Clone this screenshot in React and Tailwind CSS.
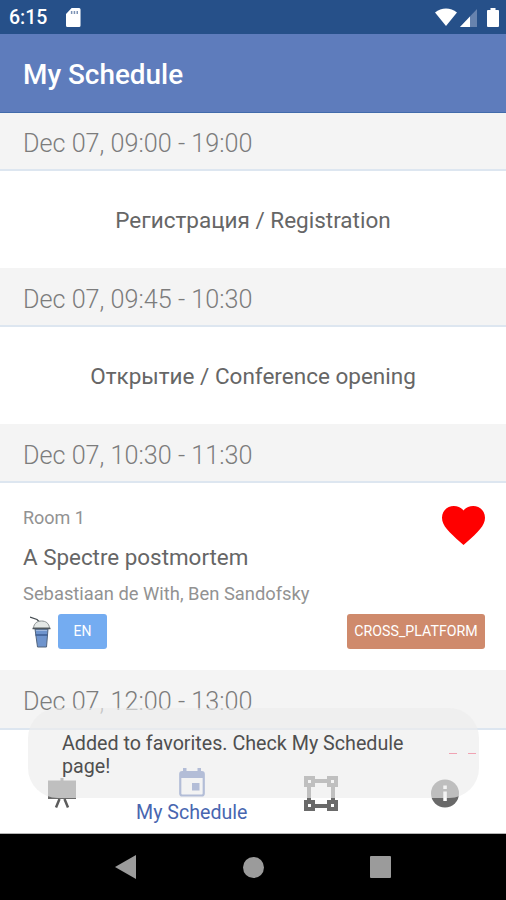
import clsx from 'clsx'

const sessions = [
  { time: 'Dec 07, 09:00 - 19:00', title: 'Регистрация / Registration' },
  { time: 'Dec 07, 09:45 - 10:30', title: 'Открытие / Conference opening' },
]

const StatusBar = () => (
  <div className="h-[34px] shrink-0 bg-[#265089] flex items-center text-white pl-[9px] pr-[7px]">
    <span className="w-[39px] pt-[2px] text-[19.5px] font-medium leading-none">6:15</span>
    <svg width="15" height="19" viewBox="0 0 16 19" preserveAspectRatio="none" className="ml-[18px]">
      <path d="M6 0h8a1.5 1.5 0 0 1 1.500 1.500v16a1.500 1.500 0 0 1-1.500 1.500H1.500A1.500 1.500 0 0 1 0 17.500V6z" fill="#fff" />
      <path d="M6 3v3M9 3v3M12 3v3" stroke="#7c92b4" strokeWidth="1.600" />
    </svg>
    <div className="flex items-center ml-auto">
      <svg width="22" height="18" viewBox="0 0 22 18">
        <path d="M0 4.500C6.500-1 15.500-1 22 4.500L11 18z" fill="#fff" />
      </svg>
      <svg width="17" height="18" viewBox="0 0 17 18" className="ml-[3px] mt-[1px]">
        <path d="M17 0v18H0z" fill="#6783ae" />
        <path d="M10 7.400V18H0z" fill="#fff" />
      </svg>
      <svg width="12" height="19" viewBox="0 0 12 20" preserveAspectRatio="none" className="ml-[10px]">
        <path d="M3.500 0h5v2H11a1 1 0 0 1 1 1v16a1 1 0 0 1-1 1H1a1 1 0 0 1-1-1V3a1 1 0 0 1 1-1h2.500z" fill="#fff" />
      </svg>
    </div>
  </div>
)

const TimeHeader = ({ className, children }) => (
  <div className={clsx('shrink-0 bg-[#f4f4f4] border-b-2 border-[#dde6f0] pl-[23px] flex items-center text-[25.2px] font-light text-[#7c7c7c]', className)}>
    {children}
  </div>
)

const Cup = () => (
  <svg width="21" height="32" viewBox="0 0 21 32" fill="none">
    <path d="M0 1l7 2.500 3 3" stroke="#444b50" strokeWidth="1.300" />
    <path d="M3.500 12c.5-5 4-7 8-7s7.500 2 8 7z" fill="#e4e8e6" stroke="#899091" />
    <path d="M5 13h13L16.500 31h-9z" fill="#6f94cd" stroke="#52647d" />
    <path d="M2.500 12.500h18" stroke="#50585f" strokeWidth="1.500" />
    <path d="M5.500 19h12" stroke="#3c5c91" strokeWidth="1.500" />
    <path d="M6 14.500h11" stroke="#a1b9de" />
  </svg>
)

const Talk = () => (
  <div className="h-[187px] shrink-0 bg-white pl-[23px] pr-[21px] flex flex-col">
    <div className="flex justify-between h-[92px]">
      <div>
        <div className="mt-[24px] h-[22px] leading-[22px] text-[18px] text-[#929292]">Room 1</div>
        <div className="mt-[14px] h-[28px] leading-[28px] text-[22.4px] text-[#666]">A Spectre postmortem</div>
      </div>
      <svg width="43" height="39" viewBox="2 3 20 18.350" preserveAspectRatio="none" className="mt-[23px]">
        <path d="M12 21.350l-1.450-1.320C5.400 15.360 2 12.280 2 8.500 2 5.420 4.420 3 7.500 3c1.740 0 3.410.810 4.500 2.090C13.090 3.810 14.760 3 16.500 3 19.580 3 22 5.420 22 8.500c0 3.780-3.400 6.860-8.550 11.540z" fill="#f00" />
      </svg>
    </div>
    <div className="mt-[7px] h-[24px] leading-[24px] text-[18.35px] text-[#929292]">Sebastiaan de With, Ben Sandofsky</div>
    <div className="mt-[8px] flex items-center h-[35px]">
      <div className="ml-[7px] w-[28px]"><Cup /></div>
      <span className="w-[49px] h-[35px] rounded-[3px] bg-[#74acf1] flex items-center justify-center text-[14px] text-white">EN</span>
      <span className="ml-auto w-[138px] h-[35px] rounded-[3px] bg-[#cf8a6c] flex items-center justify-center text-[14.2px] text-white">CROSS_PLATFORM</span>
    </div>
  </div>
)

const BottomTabs = () => (
  <div className="relative h-[104px] shrink-0 bg-white border-b border-[#b5b5b5]">
    <div className="h-full grid grid-cols-4">
      <div className="pt-[48px] pl-[47px]">
        <svg width="30" height="31" viewBox="0 0 30 31" fill="none">
          <path d="M13.500 0h3v2.500H29v18.500H1V2.500h12.500z" fill="#6b6b6b" />
          <path d="M12.500 21L9 29.500M17.500 21l3.500 8.500" stroke="#5c5c5c" strokeWidth="2.500" />
        </svg>
      </div>
      <div className="flex flex-col items-center pt-[38px] text-[#4866b0]">
        <svg width="26" height="29" viewBox="0 0 26 29" fill="none" className="ml-[4px]">
          <rect x="1.250" y="4" width="23.500" height="23.500" rx="2" stroke="currentColor" strokeWidth="2.200" />
          <path d="M1 4h24v6H1zM4 0h3.500v4H4zM18.500 0H22v4h-3.500zM13 15h7.500v7.500H13z" fill="currentColor" />
        </svg>
        <span className="mt-[4px] ml-[4px] text-[19.6px] leading-[24px] whitespace-nowrap">My Schedule</span>
      </div>
      <div className="pt-[46px] pl-[51px]">
        <svg width="34" height="35" viewBox="0 0 34 35" fill="none" stroke="#6a6a6a" strokeWidth="4">
          <path d="M10 5h14M10 30h14M5 10v15M29 10v15" />
          <path d="M2 2h7v7H2zM25 2h7v7h-7zM2 26h7v7H2zM25 26h7v7h-7z" />
        </svg>
      </div>
      <div className="pt-[49px] pl-[51px]">
        <svg width="28" height="29" viewBox="0 0 28 29">
          <circle cx="14" cy="14.500" r="14" fill="#696969" />
          <path d="M12.300 6.500h3.500v3.500h-3.500zM12.300 12.500h3.500v9.500h-3.500z" fill="#fff" />
        </svg>
      </div>
    </div>
    {/* toast slides over the tabs */}
    <div className="absolute -top-[22px] left-[28px] w-[451px] h-[90px] rounded-[30px] bg-[#ededed]/65 pl-[34px] pr-[3px] flex justify-between">
      <div className="w-[360px] pt-[24px] text-[19.7px] leading-[23px] text-[#4f4f4f]">
        Added to favorites. Check My Schedule page!
      </div>
      <div className="pt-[45px] flex gap-x-[11px]">
        <span className="w-[8px] h-[1px] bg-[#f0a3b3]" />
        <span className="w-[8px] h-[1px] bg-[#f0a3b3]" />
      </div>
    </div>
  </div>
)

const SystemNav = () => (
  <div className="h-[66px] shrink-0 bg-black flex items-center px-[115px] justify-between text-[#9b9b9b]">
    <svg width="21" height="24" viewBox="0 0 21 24" fill="currentColor">
      <path d="M0 12L21 0v24z" />
    </svg>
    <span className="w-[21px] h-[21px] rounded-full bg-[#9b9b9b] ml-[1px]" />
    <span className="w-[21px] h-[22px] rounded-[1px] bg-[#9b9b9b]" />
  </div>
)

export default () => {
  return (
    <div className="w-[506px] h-[900px] overflow-hidden flex flex-col bg-white font-['Roboto',sans-serif]">
      <StatusBar />
      <div className="h-[79px] shrink-0 bg-[#5e7cbc] border-b border-[#426bab] pl-[23px] pt-[4px] flex items-center text-[27.9px] font-medium text-white">
        My Schedule
      </div>
      {sessions.map((s, i) => (
        <div key={i} className="shrink-0">
          <TimeHeader className={i === 0 ? 'h-[58px] pt-[5px]' : 'h-[59px] pt-[6px]'}>{s.time}</TimeHeader>
          <div className="h-[97px] pt-[2px] flex items-center justify-center text-[22.5px] text-[#666]">
            {s.title}
          </div>
        </div>
      ))}
      <TimeHeader className="h-[59px] pt-[6px]">Dec 07, 10:30 - 11:30</TimeHeader>
      <Talk />
      <TimeHeader className="h-[60px] pt-[5px]">Dec 07, 12:00 - 13:00</TimeHeader>
      <BottomTabs />
      <SystemNav />
    </div>
  )
}
